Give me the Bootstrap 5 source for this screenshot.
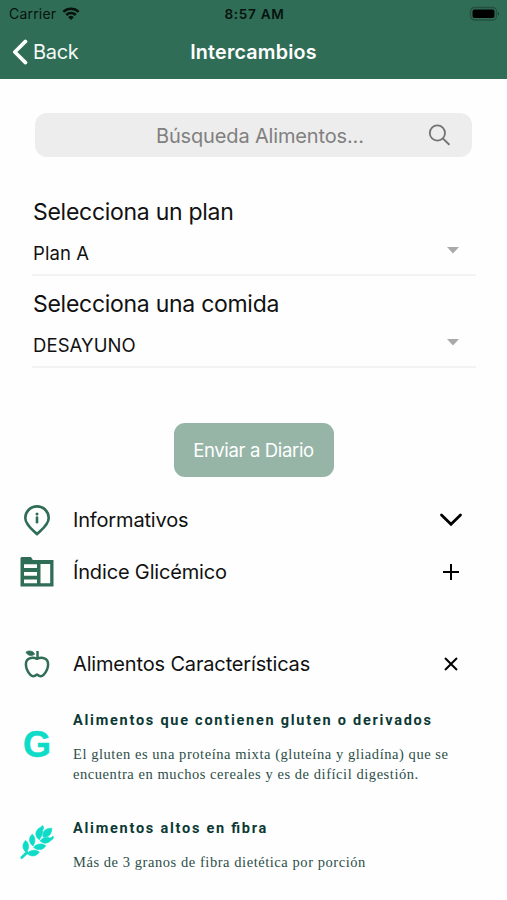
<!DOCTYPE html>
<html lang="es">
<head>
<meta charset="utf-8">
<meta name="viewport" content="width=device-width, initial-scale=1">
<title>Intercambios</title>
<link href="https://cdn.jsdelivr.net/npm/bootstrap@5.3.0/dist/css/bootstrap.min.css" rel="stylesheet">
<style>
  body { font-family: Inter, "Liberation Sans", sans-serif; color: #111; background: #fefefe; min-height: 900px; overflow: hidden; }
  svg { display: block; flex: none; }
  .app-header { background: #306d56; height: 79px; }
  .status-bar, .title-bar { display: grid; grid-template-columns: 1fr auto 1fr; align-items: center; }
  .status-bar { height: 28px; padding: 0 7px 0 9px; color: #06130e; font-size: 14px; line-height: 28px; }
  .status-bar svg { margin-top: -1px; }
  .status-left { gap: 6px; }
  .clock { font-size: 13.6px; font-weight: 600; letter-spacing: .7px; }
  .carrier { letter-spacing: .2px; }
  .title-bar { height: 48px; padding: 0 12px; font-size: 20px; line-height: 48px; }
  .back-link { letter-spacing: -.3px; color: #f4faf6; }
  .back-link span { margin-left: 5px; }
  .screen-title { font-size: 19.7px; font-weight: 600; letter-spacing: .2px; }
  .search-box { margin: 34px 35px 0; height: 44px; border-radius: 12px; background: #ededed; padding-right: 22px; color: #808080; }
  .search-box .hint { font-size: 20px; letter-spacing: -.15px; margin-left: 121px; padding-top: 1px; }
  .selectors { margin: 27px 31px 0 32px; }
  .picker { height: 92px; border-bottom: 2px solid #f3f3f3; padding: 0 17px 0 1px; }
  .picker-label { font-size: 23px; line-height: 34px; letter-spacing: -.28px; padding-top: 11px; }
  .picker-value { font-size: 18.5px; line-height: 30px; letter-spacing: .08px; padding-top: 9px; }
  .picker-value svg { margin-bottom: 5px; }
  .send-row { margin-top: 55px; }
  .btn-send { --bs-btn-padding-x: 0; width: 160px; height: 54px; padding-top: 8px; border: 0; border-radius: 11px; background: #96b5a7; color: #fff; font-size: 18.5px; letter-spacing: -.35px; }
  .section-list { margin-top: 17px; padding: 0 44px 0 17px; }
  .section-row { height: 52px; font-size: 20px; letter-spacing: -.16px; }
  .after-gap { margin-top: 40px; }
  .icon-col { width: 40px; flex: none; }
  .icon-col svg { margin: 0 auto; }
  .feature-first { padding-top: 21px; }
  .feature-next { margin-top: 34.5px; }
  .feature-next svg { margin-top: 6px; }
  .feature-title { font-family: Roboto, sans-serif; font-weight: 700; font-size: 14.5px; line-height: 20px; letter-spacing: 1.75px; color: #0c3934; font-feature-settings: "liga" 1; }
  .feature-text { margin-top: 14px; font-family: "Liberation Serif", serif; font-size: 14.5px; line-height: 19.5px; letter-spacing: .555px; color: #2d4f49; white-space: nowrap; font-feature-settings: "liga" 1; }
  .gluten-mark { font-family: "Liberation Sans", sans-serif; font-weight: 700; font-size: 36px; line-height: 40px; color: #0fdcc8; padding-top: 14px; -webkit-text-stroke: .5px #0fdcc8; }
</style>
</head>
<body>
<header class="app-header">
  <div class="status-bar">
    <div class="status-left d-flex align-items-center">
      <span class="carrier">Carrier</span>
      <svg width="18" height="14" viewBox="0 0 20 15" fill="none" stroke="#06130e" stroke-width="2.8"><path d="M1.500 5.200a12.200 12.200 0 0 1 17 0M4.700 8.600a7.600 7.600 0 0 1 10.600 0"/><path d="M10 14.200 6.900 11a4.400 4.400 0 0 1 6.200 0z" fill="#06130e" stroke="none"/></svg>
    </div>
    <span class="clock">8:57 AM</span>
    <svg class="ms-auto" width="31" height="16" viewBox="0 0 31 16"><rect x="1.500" y="1.500" width="26" height="12.500" rx="4" fill="#306d56" stroke="#24513f" stroke-width="1.300"/><rect x="3.500" y="3.500" width="22" height="8.600" rx="2" fill="#000"/><path d="M29 5.800q2 1.900 0 3.900z" fill="#173c2d"/></svg>
  </div>
  <div class="title-bar text-white">
    <div class="back-link d-flex align-items-center">
      <svg width="16" height="26" viewBox="0 0 16 26" fill="none" stroke="#fff" stroke-width="3.600" stroke-linecap="round" stroke-linejoin="round"><path d="M13.500 2.400 2.800 13l10.700 10.600"/></svg>
      <span>Back</span>
    </div>
    <span class="screen-title">Intercambios</span>
    <span></span>
  </div>
</header>
<main>
  <div class="search-box d-flex align-items-center justify-content-between">
    <span class="hint">Búsqueda Alimentos...</span>
    <svg width="22" height="22" viewBox="0 0 22 22" fill="none" stroke="#737373" stroke-width="1.800"><circle cx="9.400" cy="9" r="7.600"/><path d="m14.800 14.400 6.600 6.400" stroke-width="2"/></svg>
  </div>
  <section class="selectors">
    <div class="picker">
      <div class="picker-label">Selecciona un plan</div>
      <div class="picker-value d-flex align-items-center justify-content-between"><span>Plan A</span><svg width="12" height="7" viewBox="0 0 12 7"><path d="M0 0h12L6 6.500z" fill="#a9a9a9"/></svg></div>
    </div>
    <div class="picker">
      <div class="picker-label">Selecciona una comida</div>
      <div class="picker-value d-flex align-items-center justify-content-between"><span>DESAYUNO</span><svg width="12" height="7" viewBox="0 0 12 7"><path d="M0 0h12L6 6.500z" fill="#a9a9a9"/></svg></div>
    </div>
  </section>
  <div class="send-row text-center"><button class="btn btn-send" type="button">Enviar a Diario</button></div>
  <section class="section-list">
    <div class="section-row d-flex align-items-center">
      <div class="icon-col"><svg width="26" height="31" viewBox="0 0 26 31" fill="none" stroke="#306d56" stroke-width="2.600"><path d="M13 29.200C9.500 25.300 1.300 20 1.300 12.900a11.700 11.500 0 0 1 23.400 0C24.700 20 16.500 25.300 13 29.200z" stroke-linejoin="round"/><path d="M13 12.600v4.600" stroke-linecap="round"/><circle cx="13" cy="8.900" r="1.500" fill="#306d56" stroke="none"/></svg></div>
      <span class="ms-3">Informativos</span>
      <svg class="ms-auto" width="24" height="14" viewBox="0 0 24 14" fill="none" stroke="#000" stroke-width="2.800" stroke-linecap="round"><path d="m2.500 2 9.500 9.200L21.500 2"/></svg>
    </div>
    <div class="section-row d-flex align-items-center">
      <div class="icon-col"><svg width="34" height="30" viewBox="0 0 34 30"><path fill="#306d56" fill-rule="evenodd" d="M1.500 0H11l1.800 3H33.500v26.500H.500V1zM4 7.200v3.700h13V7.200zM4 15v3.700h13V15zm0 7.600v3.600h13v-3.600zM20.500 7v19.200h9.700V7z"/></svg></div>
      <span class="ms-3">Índice Glicémico</span>
      <svg class="ms-auto" width="24" height="18" viewBox="0 0 24 18" stroke="#000" stroke-width="2"><path d="M12 1v16M4 9h16"/></svg>
    </div>
    <div class="section-row after-gap d-flex align-items-center">
      <div class="icon-col"><svg width="26" height="28" viewBox="0 0 26 28" fill="none" stroke="#306d56" stroke-width="2.500" stroke-linejoin="round"><path d="M13 8.800C8 6.700 2 8 1.900 14.200c0 4.600 2.700 8.700 4.600 10.700 2 2.100 4.500 1.300 6.500-.300 2 1.600 4.500 2.400 6.500.300 1.900-2 4.600-6.100 4.600-10.700C24 8 18 6.700 13 8.800z"/><path d="M13.500 8.800V1"/><path d="M2 2c3.500-2 7.500-.800 8.600 2.200C7 6.400 3.500 5.600 2 2z" fill="#306d56" stroke-width=".8"/></svg></div>
      <span class="ms-3">Alimentos Características</span>
      <svg class="ms-auto" width="24" height="14" viewBox="0 0 24 14" stroke="#000" stroke-width="2"><path d="m6 1 12 12M18 1 6 13"/></svg>
    </div>
    <article class="feature-first d-flex">
      <div class="icon-col text-center gluten-mark">G</div>
      <div class="ms-3">
        <div class="feature-title">Alimentos que contienen gluten o derivados</div>
        <div class="feature-text">El gluten es una proteína mixta (gluteína y gliadína) que se<br>encuentra en muchos cereales y es de difícil digestión.</div>
      </div>
    </article>
    <article class="feature-next d-flex">
      <div class="icon-col">
        <svg width="34" height="35" viewBox="0 0 34 35" fill="#0fdcc8" stroke="#0fdcc8" stroke-width=".7" stroke-linejoin="round">
          <path d="M1.800 32.500 7 27.500" stroke-width="2.800" stroke-linecap="round"/>
          <path d="M6.500 27.500C2 24.500 1.800 18.500 5.800 15.500 9.300 18.500 9.300 23.500 6.500 27.500zM13 21C8.500 18 8.500 12 12.300 9.300 15.700 12.300 15.700 17 13 21zM19.300 14.700C13.800 11 15.800 5.500 19 3.300 21 2.300 21.800 1.200 22.300.500 24 1.500 23.800 3.500 22.600 5.500 22.500 9 21.500 12 19.300 14.700z"/>
          <path d="M7 28.500c4-4 8.700-4.200 12.300-1.500-2.800 4.600-8.300 5.200-12.300 1.500zM13.500 22.200c4-4 8.700-4.200 12.300-1.500-2.800 4.600-8.300 5.200-12.300 1.500zM20 15.800c3-3.500 7-4.200 9.800-2.900 1.400.300 2-.800 3.200-1.900 1.200 2-.500 3.800-2.300 4.600-3.200 3.500-7.500 3.300-10.700.200z"/>
          <path d="M23 11.800C22 6.300 25.500 3.200 31.800 3.200 31.700 9.500 28.300 12.800 23 11.800z"/>
        </svg>
      </div>
      <div class="ms-3">
        <div class="feature-title">Alimentos altos en fibra</div>
        <div class="feature-text">Más de 3 granos de fibra dietética por porción</div>
      </div>
    </article>
  </section>
</main>
<script src="https://cdn.jsdelivr.net/npm/bootstrap@5.3.0/dist/js/bootstrap.bundle.min.js"></script>
</body>
</html>
